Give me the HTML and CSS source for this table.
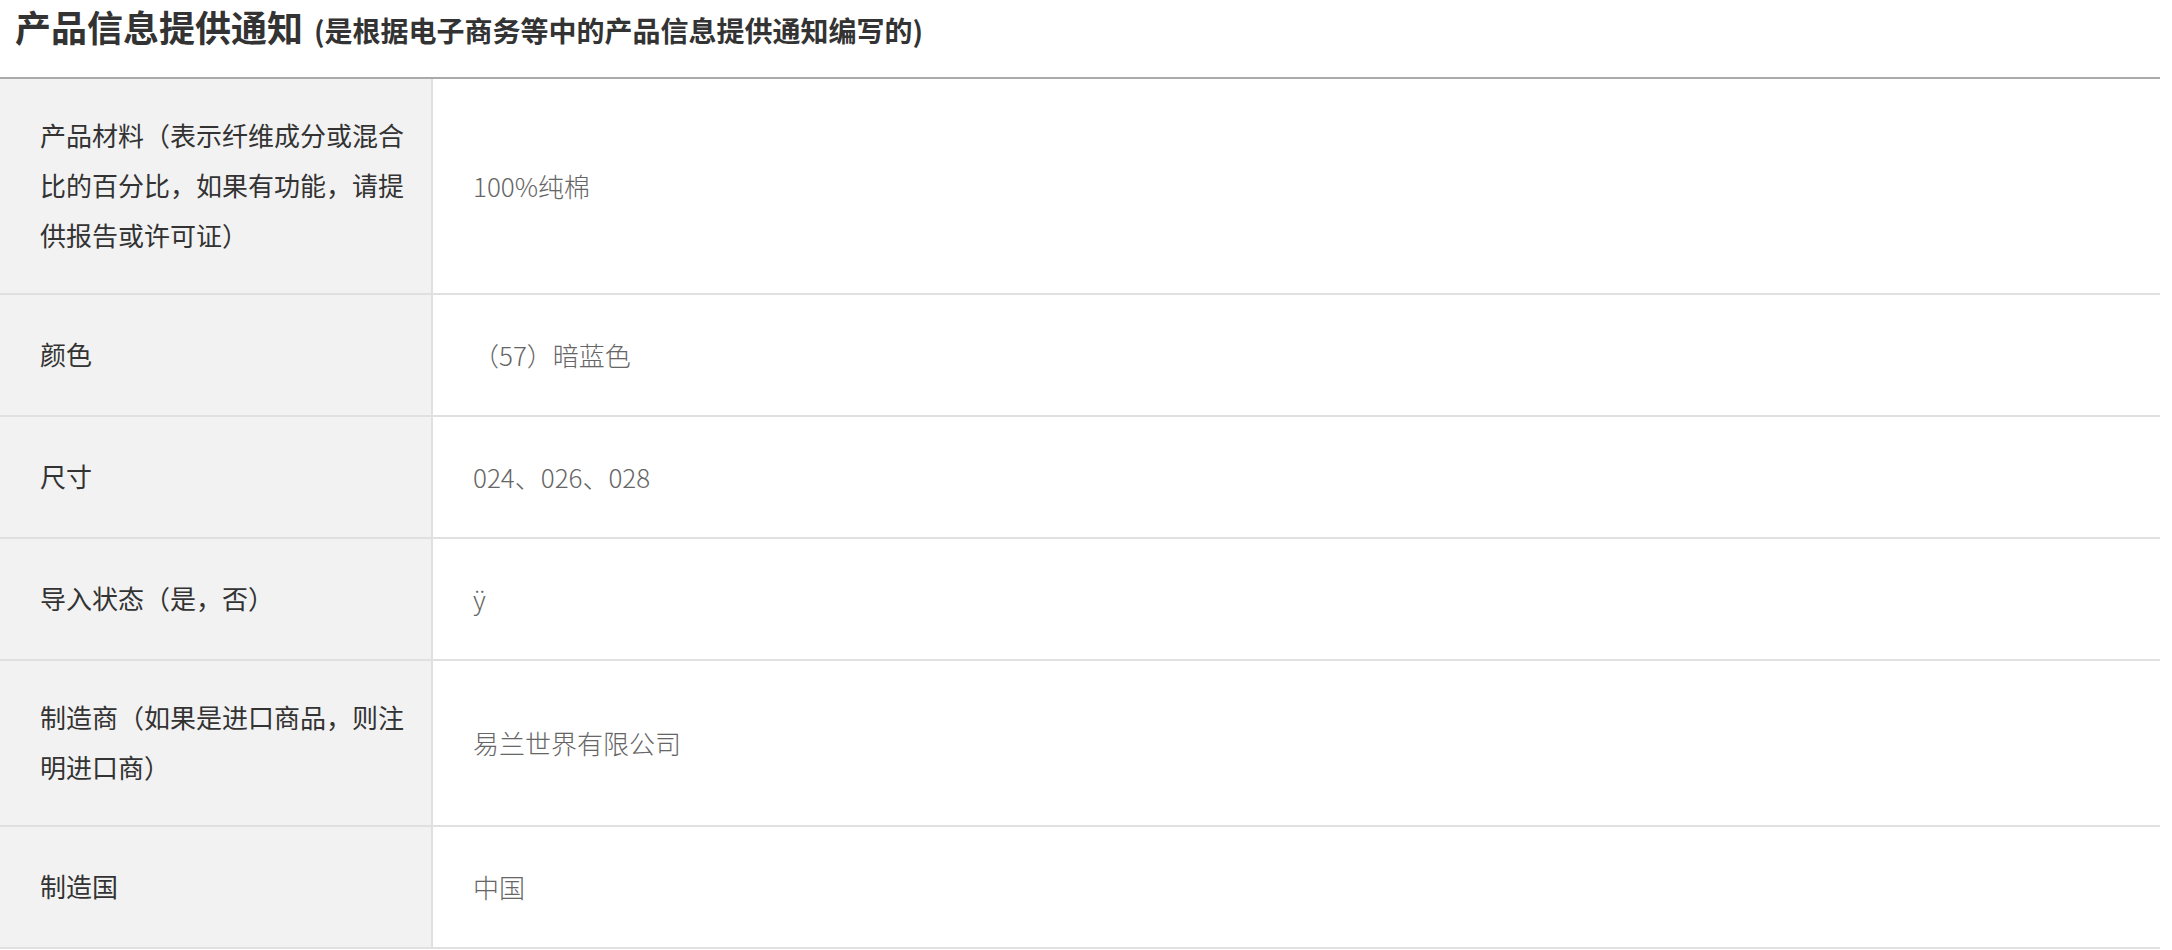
FILE: index.html
```html
<!DOCTYPE html>
<html lang="zh-CN">
<head>
<meta charset="utf-8">
<title>产品信息提供通知</title>
<link rel="stylesheet" href="styles.css">
</head>
<body>
<section class="notice">
  <h2 class="notice-title">产品信息提供通知<span class="notice-sub">(是根据电子商务等中的产品信息提供通知编写的)</span></h2>
  <table class="notice-table">
    <tbody>
      <tr><th>产品材料（表示纤维成分或混合比的百分比，如果有功能，请提供报告或许可证）</th><td>100%纯棉</td></tr>
      <tr><th>颜色</th><td>（57）暗蓝色</td></tr>
      <tr><th>尺寸</th><td>024、026、028</td></tr>
      <tr><th>导入状态（是，否）</th><td>ÿ</td></tr>
      <tr><th>制造商（如果是进口商品，则注明进口商）</th><td>易兰世界有限公司</td></tr>
      <tr><th>制造国</th><td>中国</td></tr>
    </tbody>
  </table>
</section>
</body>
</html>
```
FILE: styles.css
```css
html, body {
  margin: 0;
  padding: 0;
  background: #fff;
}
body {
  font-family: "Noto Sans CJK SC", "Noto Sans", sans-serif;
}
.notice {
  width: 2160px;
}
.notice-title {
  margin: 0;
  height: 52px;
  padding: 0 0 25px 15px;
  line-height: 52px;
  font-size: 36px;
  font-weight: 700;
  color: #333;
  border-bottom: 2px solid #aaa;
}
.notice-sub {
  margin-left: 11px;
  font-size: 28px;
}
.notice-table {
  width: 100%;
  border-collapse: separate;
  border-spacing: 0;
}
.notice-table th,
.notice-table td {
  vertical-align: middle;
  text-align: left;
  font-size: 26px;
  line-height: 50px;
  border-bottom: 2px solid #e0e0e0;
}
.notice-table th {
  width: 366px;
  padding: 31px 25px 33px 40px;
  background: #f2f2f2;
  color: #333;
  font-weight: 400;
  border-right: 2px solid #e0e0e0;
}
.notice-table td {
  padding: 35px 40px 35px 40px;
  color: #666;
  font-weight: 300;
}
```
